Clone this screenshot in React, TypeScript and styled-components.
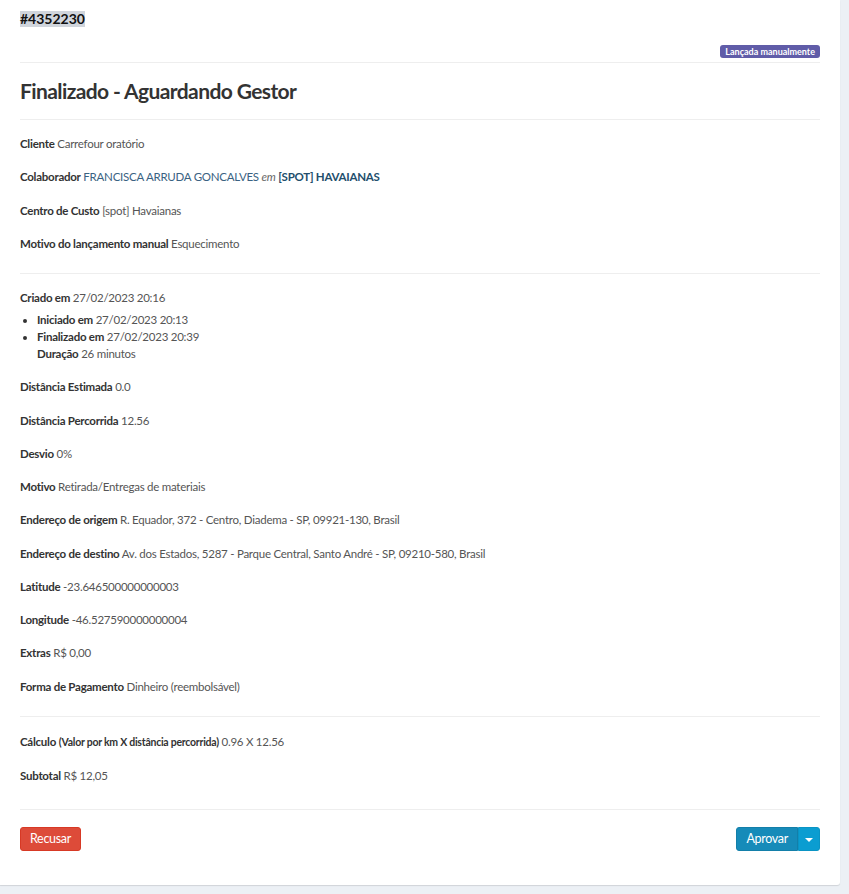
import React from "react";
import styled, { createGlobalStyle } from "styled-components";

const GlobalStyle = createGlobalStyle`
  html, body {
    margin: 0;
    padding: 0;
    background: #ecf0f5;
  }
  body {
    font-family: Lato, "Noto Sans", sans-serif;
    font-size: 11.5px;
    letter-spacing: -0.25px;
    color: #333;
  }
`;

const Page = styled.div`
  width: 849px;
  min-height: 894px;
  padding: 0 9px 9px 0;
  box-sizing: border-box;
`;

const Card = styled.div`
  width: 840px;
  height: 885px;
  background: #fff;
  border-radius: 0 0 3px 0;
  box-shadow: 0 1px 1px rgba(0, 0, 0, 0.12);
  padding: 11px 20px 0;
  box-sizing: border-box;
`;

const IdTag = styled.span`
  display: inline-block;
  background: #d0d5dc;
  font-size: 14px;
  letter-spacing: 0;
  font-weight: 700;
  line-height: 16px;
  color: #111;
`;

const BadgeRow = styled.div`
  display: flex;
  justify-content: flex-end;
  margin-top: 18px;
  padding-bottom: 4px;
  border-bottom: 1px solid #eee;
`;

const Badge = styled.span`
  background: #605ca8;
  color: #fff;
  font-size: 9px;
  letter-spacing: 0;
  font-weight: 700;
  line-height: 13px;
  padding: 0 5px;
  border-radius: 3px;
`;

const Title = styled.h2`
  margin: 0;
  padding: 15px 0;
  font-size: 21px;
  letter-spacing: -0.6px;
  line-height: 26px;
  font-weight: 700;
  color: #333;
  border-bottom: 1px solid #eee;
`;

const Section = styled.div<{ $start?: number; $end?: number }>`
  padding: ${(p) => p.$start ?? 16}px 0 ${(p) => p.$end ?? 5}px;
  border-bottom: 1px solid #eee;
`;

const Field = styled.p<{ $tight?: boolean }>`
  margin: 0 0 ${(p) => (p.$tight ? 0 : 16)}px;
  line-height: 17.25px;
`;

const Label = styled.b`
  font-weight: 700;
  color: #333;
`;

const Value = styled.span<{ $tone?: "link" }>`
  color: ${(p) => (p.$tone === "link" ? "#3a6282" : "#555")};
`;

const Strong = styled.b`
  color: #234e6c;
`;

const Em = styled.em`
  color: #666;
`;

const Small = styled.small`
  font-size: 10.5px;
  font-weight: 700;
  color: #333;
`;

const Timeline = styled.ul`
  margin: 5px 0 16px;
  padding-left: 17px;
  line-height: 17px;
`;

const Footer = styled.div`
  display: flex;
  justify-content: space-between;
  align-items: center;
  padding-top: 17px;
`;

type Variant = "danger" | "info" | "caret";

const fills: Record<Variant, [string, string]> = {
  danger: ["#dd4b39", "#d73925"],
  info: ["#168bb9", "#137fa9"],
  caret: ["#0b9dd1", "#0a94c4"],
};

const Button = styled.button<{ $variant: Variant }>`
  font-family: inherit;
  font-size: 12.5px;
  letter-spacing: -0.3px;
  line-height: 18px;
  height: 24px;
  padding: ${(p) => (p.$variant === "caret" ? "0 6px" : "0 9px")};
  color: #fff;
  border: 1px solid ${(p) => fills[p.$variant][1]};
  background: ${(p) => fills[p.$variant][0]};
  border-radius: ${(p) =>
    p.$variant === "info" ? "3px 0 0 3px" : p.$variant === "caret" ? "0 3px 3px 0" : "3px"};
  cursor: pointer;
`;

const Group = styled.div`
  display: flex;
`;

const Caret = styled.span`
  display: inline-block;
  width: 0;
  height: 0;
  border-top: 4px solid #fff;
  border-left: 4px solid transparent;
  border-right: 4px solid transparent;
  vertical-align: middle;
`;

const row = (label: string, value: string) => (
  <Field key={label}>
    <Label>{label}</Label> <Value>{value}</Value>
  </Field>
);

export default function App() {
  return (
    <Page>
      <GlobalStyle />
      <Card>
        <IdTag>#4352230</IdTag>
        <BadgeRow>
          <Badge>Lançada manualmente</Badge>
        </BadgeRow>
        <Title>Finalizado - Aguardando Gestor</Title>

        <Section $start={15} $end={5}>
          {row("Cliente", "Carrefour oratório")}
          <Field>
            <Label>Colaborador</Label>{" "}
            <Value $tone="link">FRANCISCA ARRUDA GONCALVES</Value> <Em>em</Em>{" "}
            <Strong>[SPOT] HAVAIANAS</Strong>
          </Field>
          {row("Centro de Custo", "[spot] Havaianas")}
          {row("Motivo do lançamento manual", "Esquecimento")}
        </Section>

        <Section $start={15} $end={5}>
          <Field $tight>
            <Label>Criado em</Label> <Value>27/02/2023 20:16</Value>
          </Field>
          <Timeline>
            <li>
              <Label>Iniciado em</Label> <Value>27/02/2023 20:13</Value>
            </li>
            <li>
              <Label>Finalizado em</Label> <Value>27/02/2023 20:39</Value>
              <br />
              <Label>Duração</Label> <Value>26 minutos</Value>
            </li>
          </Timeline>
          {row("Distância Estimada", "0.0")}
          {row("Distância Percorrida", "12.56")}
          {row("Desvio", "0%")}
          {row("Motivo", "Retirada/Entregas de materiais")}
          {row("Endereço de origem", "R. Equador, 372 - Centro, Diadema - SP, 09921-130, Brasil")}
          {row(
            "Endereço de destino",
            "Av. dos Estados, 5287 - Parque Central, Santo André - SP, 09210-580, Brasil"
          )}
          {row("Latitude", "-23.646500000000003")}
          {row("Longitude", "-46.527590000000004")}
          {row("Extras", "R$ 0,00")}
          {row("Forma de Pagamento", "Dinheiro (reembolsável)")}
        </Section>

        <Section $start={16} $end={9}>
          <Field>
            <Label>Cálculo</Label> <Small>(Valor por km X distância percorrida)</Small>{" "}
            <Value>0.96 X 12.56</Value>
          </Field>
          {row("Subtotal", "R$ 12,05")}
        </Section>

        <Footer>
          <Button $variant="danger">Recusar</Button>
          <Group>
            <Button $variant="info">Aprovar</Button>
            <Button $variant="caret">
              <Caret />
            </Button>
          </Group>
        </Footer>
      </Card>
    </Page>
  );
}
